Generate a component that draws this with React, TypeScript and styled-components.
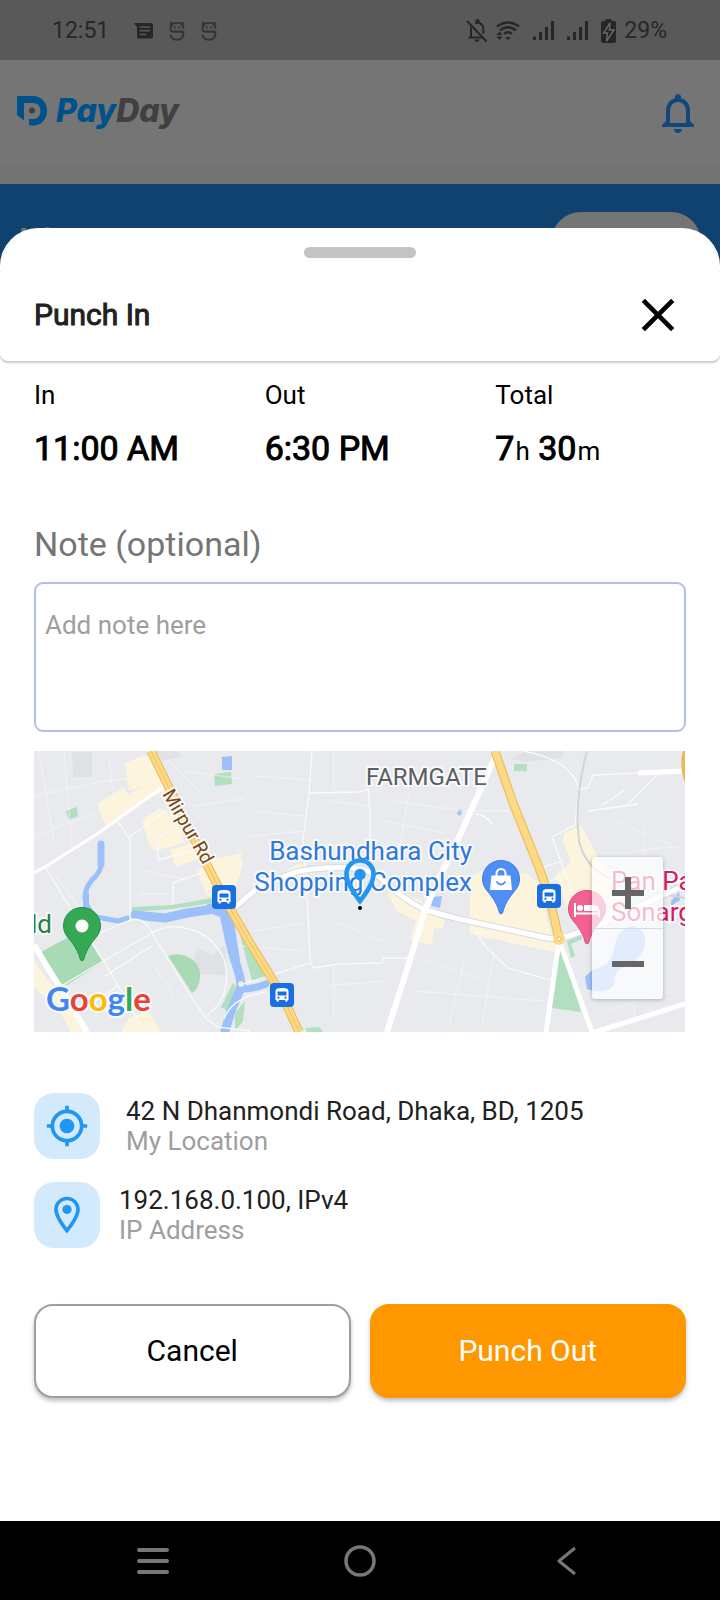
import React from 'react';
import styled, { createGlobalStyle } from 'styled-components';
import {
  MdClose,
  MdMyLocation,
  MdOutlineLocationOn,
  MdNotificationsNone,
} from 'react-icons/md';

const GlobalStyle = createGlobalStyle`
  *, *::before, *::after { box-sizing: border-box; }
  body {
    margin: 0;
    background: #10426f;
    font-family: Roboto, "Liberation Sans", sans-serif;
    color: #212121;
  }
  button, textarea { font: inherit; }
  h1, h2, p, dl, dt, dd { margin: 0; font-weight: 400; }
`;

const Screen = styled.div`
  display: flex;
  flex-direction: column;
  min-height: 100vh;
`;

const StatusBar = styled.header`
  display: flex;
  align-items: center;
  justify-content: space-between;
  height: 60px;
  padding: 2px 53px 0 52px;
  background: #595959;
  color: #272727;
  font-size: 23px;
  line-height: 28px;
`;

const StatusGroup = styled.div<{ $gap: number }>`
  display: flex;
  align-items: center;
  gap: ${(p) => p.$gap}px;
  svg { display: block; }
`;

const Clock = styled.time`
  margin-right: 9px;
`;

const AppBar = styled.div`
  display: flex;
  align-items: center;
  justify-content: space-between;
  height: 124px;
  padding: 0 18px 18px 17px;
  background: linear-gradient(#757575 105px, #727272 105px);
`;

const Brand = styled.div`
  display: flex;
  align-items: center;
  gap: 8px;
  padding-bottom: 5px;
`;

const BrandName = styled.span`
  font-family: Inter, "Open Sans", sans-serif;
  font-size: 32px;
  line-height: 40px;
  font-weight: 800;
  font-style: italic;
  color: #404040;
`;

const BrandAccent = styled.span`
  color: #00508a;
`;

const IconButton = styled.button<{ $color: string }>`
  display: flex;
  padding: 0;
  border: 0;
  background: none;
  color: ${(p) => p.$color};
  cursor: pointer;
`;

const Hero = styled.div`
  display: flex;
  justify-content: space-between;
  height: 84px;
  padding: 28px 19px 0;
  background: #10426f;
`;

const Greeting = styled.p`
  padding-top: 8px;
  font-size: 34px;
  line-height: 40px;
  font-weight: 700;
  color: #757575;
`;

const HeroPill = styled.div`
  width: 150px;
  height: 60px;
  border-radius: 30px;
  background: #757575;
`;

const Sheet = styled.main`
  position: relative;
  flex: 1;
  margin-top: -40px;
  border-radius: 38px 38px 0 0;
  background: #fff;
`;

const Handle = styled.div`
  width: 112px;
  height: 11px;
  margin: 0 auto;
  border-radius: 6px;
  background: #c4c4c4;
`;

const HandleArea = styled.div`
  padding: 19px 0 9px;
`;

const SheetHeader = styled.div`
  display: flex;
  align-items: center;
  justify-content: space-between;
  height: 94px;
  padding: 2px 34px 0 34px;
  border-radius: 8px;
  box-shadow: 0 2px 2px rgba(0, 0, 0, 0.2), 0 0 2px rgba(0, 0, 0, 0.06);
`;

const Title = styled.h1`
  font-size: 30px;
  line-height: 36px;
  -webkit-text-stroke: 1px #212121;
`;

const Content = styled.div`
  padding: 19px 34px 60px;
`;

const Stats = styled.dl`
  display: grid;
  grid-template-columns: repeat(3, 1fr);
  gap: 40px;
  color: #000;
`;

const Stat = styled.div`
  display: flex;
  flex-direction: column;
  gap: 18px;
  white-space: nowrap;
`;

const StatLabel = styled.dt`
  font-size: 26px;
  line-height: 30px;
`;

const StatValue = styled.dd`
  font-size: 34px;
  line-height: 40px;
  -webkit-text-stroke: 1px #000;
`;

const Unit = styled.span`
  margin-left: 1px;
  font-size: 26px;
  line-height: 30px;
  -webkit-text-stroke: 0;
`;

const NoteLabel = styled.label`
  display: block;
  margin-top: 56px;
  font-size: 34px;
  line-height: 40px;
  color: #757575;
`;

const NoteInput = styled.textarea`
  display: block;
  width: 100%;
  height: 150px;
  margin-top: 18px;
  padding: 26px 9px;
  border: 2px solid #b5bdf0;
  border-radius: 9px;
  outline: 0;
  resize: none;
  background: #fff;
  font-size: 26px;
  line-height: 30px;
  &::placeholder { color: #9e9e9e; opacity: 1; }
`;

const MapFrame = styled.section`
  position: relative;
  height: 281px;
  margin: 19px 1px 0 0;
  overflow: hidden;
  background: #e8eaed;
  svg { display: block; }
`;

const ZoomControls = styled.div`
  position: absolute;
  right: 22px;
  bottom: 33px;
  display: flex;
  flex-direction: column;
  border-radius: 3px;
  background: rgba(255, 255, 255, 0.7);
  box-shadow: 0 1px 4px rgba(0, 0, 0, 0.25);
`;

const ZoomButton = styled.button`
  display: grid;
  place-items: center;
  width: 71px;
  height: 71px;
  padding: 0;
  border: 0;
  background: none;
  cursor: pointer;
  & + & { border-top: 1px solid #dadcdf; }
`;

const Details = styled.div`
  display: flex;
  flex-direction: column;
  gap: 23px;
  margin-top: 61px;
`;

const DetailRow = styled.div<{ $gap: number }>`
  display: flex;
  align-items: center;
  gap: ${(p) => p.$gap}px;
`;

const DetailIcon = styled.div`
  display: grid;
  place-items: center;
  width: 66px;
  height: 66px;
  border-radius: 20px;
  background: #d3e9fc;
  color: #2196f3;
`;

const DetailText = styled.p<{ $muted?: boolean }>`
  font-size: 26px;
  line-height: 30px;
  color: ${(p) => (p.$muted ? '#9e9e9e' : '#212121')};
`;

const Actions = styled.div`
  display: grid;
  grid-template-columns: 1fr 1fr;
  gap: 19px;
  margin-top: 56px;
`;

const ActionButton = styled.button<{ $primary?: boolean }>`
  height: 94px;
  border: 2px solid ${(p) => (p.$primary ? '#ff9800' : '#9e9e9e')};
  border-radius: 19px;
  background: ${(p) => (p.$primary ? '#ff9800' : '#fff')};
  color: ${(p) => (p.$primary ? '#fff' : '#000')};
  font-size: 30px;
  line-height: 36px;
  box-shadow: 0 3px 4px rgba(0, 0, 0, 0.25);
  cursor: pointer;
`;

const NavBar = styled.nav`
  position: relative;
  display: grid;
  grid-template-columns: repeat(3, 1fr);
  height: 79px;
  padding: 0 50px;
  background: #000;
`;

const NavButton = styled.button`
  display: grid;
  place-items: center;
  padding: 0;
  border: 0;
  background: none;
  cursor: pointer;
`;

const MutedBellIcon = () => (
  <svg width="22" height="24" viewBox="0 0 22 24" fill="none" stroke="#272727" strokeWidth="2">
    <path d="M1 2l19.500 20.500" />
    <path d="M2.500 18.500h15M5 18V10q0-2 1-3.500M9 4.200q5-1.600 7.500 2.300.8 1.500.8 3.500v4.500" />
    <path d="M9.500 3.500V2a2 2 0 0 1 4 0v1.500zM8.500 20.500h5q-.5 2.500-2.500 2.500t-2.500-2.500z" fill="#272727" stroke="none" />
  </svg>
);

const AppNoticeIcon = () => (
  <svg width="16" height="20" viewBox="0 0 16 20" fill="none" stroke="#323232" strokeWidth="1.8">
    <path d="M14.400 8V7.500C14.400 3.600 11.600 1.900 8 1.900S1.600 3.600 1.600 7.500v1.100c0 1.400.8 2 2 2h10.800V13c0 3.600-2.600 5.800-6.400 5.800S1.600 16.600 1.600 13.500" />
    <path d="M1 1.200h3.500L1.500 4.500zM15 1.200h-3.500l3 3.300z" fill="#323232" stroke="none" />
    <path d="M4.800 6.500h1.800M9.400 6.500h1.800M5 10.600h9" />
  </svg>
);

const SignalIcon = () => (
  <svg width="21" height="20" viewBox="0 0 21 20" fill="#262626">
    <path d="M0 15.500h3V19H0zM6 11h3v8H6zM12 6h3v13h-3zM18 0h3v19h-3z" />
  </svg>
);

const BusStop = ({ x, y }: { x: number; y: number }) => (
  <g transform={`translate(${x - 12} ${y - 12})`}>
    <rect width="24" height="24" rx="4" fill="#1a6fe0" />
    <path
      fill="#fff"
      d="M5.500 8.500C5.500 5.500 8 5 12 5s6.500.5 6.500 3.500V17h-1v1.600h-2.300V17H8.800v1.600H6.500V17h-1zM7.500 8.500v4h9v-4z"
      fillRule="evenodd"
    />
    <circle cx="8.500" cy="14.700" r="1.100" fill="#1a6fe0" />
    <circle cx="15.500" cy="14.700" r="1.100" fill="#1a6fe0" />
  </g>
);

const PlacePin = ({ x, y, fill, edge, children }: {
  x: number; y: number; fill: string; edge: string; children: React.ReactNode;
}) => (
  <g transform={`translate(${x} ${y})`}>
    <path
      d="M0-18.500C10.500-18.500 18.500-10.500 18.500 0 18.500 7 14.500 11 10 16.500 5.500 22.500 3 28 1.500 34Q0 36-1.500 34C-3 28-5.500 22.500-10 16.500-14.500 11-18.500 7-18.500 0-18.500-10.500-10.500-18.500 0-18.500z"
      fill={fill}
      stroke={edge}
    />
    {children}
  </g>
);

const CityMap = () => (
  <svg width="100%" height="281" viewBox="0 0 651 281" preserveAspectRatio="xMidYMid slice" role="img" aria-label="Map around Bashundhara City, Dhaka">
    <rect width="651" height="281" fill="#e8eaed" />

    {/* Large plots */}
    <path fill="#dfe1e4" d="M38 1h20v25H39zM122 0h20l7 5-21 5zM477 8l13-8h40l-3 7-35 4zM163 197l16 7 12-10 2 30-29-1-4-14z" />

    {/* Commercial areas */}
    <g fill="#fcf4dc">
      <path d="M91 12l20-8 13 5 8 14 4 14-15 8-6-10-20 4zM63 53l27-17 4 7 28-13 9 8-31 17-22 20-7-1zM108 69l18-12 12 7 9 16 4 12-31 8-6-9zM136 99l25-8 9 15-28 10zM163 121l13-12 31-7v20l-6 13-28 10z" />
      <path d="M0 210l30 40 20 31H37l-11-20L0 236zM94 268l20-9 13 22H87zM250 120l16-8 15 8-14 6zM353 142h15l20 8 6 12 17 7-2 9-9-1-2 17-22-6 6-18-19-10zM206 104l3 8-3 12z" />
      <path d="M436 126l14-8 43 5 14 10 7 40 8 20-2 8-84-18zM530 82l17-8 17 32 26 39-7 28-47-6-12-36-4-5 17-15-8-20zM436 178l24 6-6 4z" />
    </g>

    {/* Parks */}
    <g fill="#b2dfc0">
      <path d="M180 23l17-2 1 12-17 2zM32 60l11-4 1 9-9 4zM98 156l41-2 39-7v5l-39 6-41 3zM204 176l12 16 20 34-18 4zM212 192l12 18 14 15-15 4zM187 256l12-24 3 4-9 24zM201 262l10-12-2 20-8 10zM271 277l15-1 3 5h-16zM480 13h13v7h-13zM524 202l4-5 19 64-29-4zM533 190l14-6 1 4-11 5 4 12-4 2z" />
      <path fill="#a8dab5" d="M7 201l41-22 21 32-36 23-7-2zM134 205q6-3 15-1 18 6 17 22-1 12-8 16z" />
    </g>

    {/* Waterways */}
    <g stroke="#9cc0f9" fill="none" strokeLinecap="round" strokeLinejoin="round">
      <path d="M67 93v20" strokeWidth="7" />
      <path d="M67 115q-2 8-9 14-7 8-7 17 0 7 5 13" strokeWidth="5" />
      <path d="M52 143v12" strokeWidth="6" />
      <path d="M62 166l22 4 10-3" strokeWidth="5" />
      <path d="M101 164l30 3 22-5 28-4" strokeWidth="9" />
      <path d="M176 157l14 6 7 33 9 30 1 10-10 24-6 20" strokeWidth="9" />
      <path d="M186 155l8 10 7 44" strokeWidth="10" />
      <path d="M207 238q14 0 25-5" strokeWidth="7" />
    </g>
    <g fill="#9cc0f9">
      <path d="M188 6l10-1v14h-10zM399 146l9-1-2 12-9-2zM425 58l4 1-3 6-3-2zM551 226q7-8 15-10 10-4 13-14 3-18 10-23 12-8 20 2 4 9 1 16-7 16-24 21-6 4-6 16-9 10-27 4zM637 150l8-9 1 8-9 6z" />
      <circle cx="207" cy="233" r="3" fill="#e8eaed" />
    </g>

    {/* Minor streets */}
    <g stroke="#f9fafb" fill="none" strokeWidth="1.300">
      <path d="M11 116l37 60 23 36 38 66M29 234l42-25 47-27q12-8 27-6 32 4 45 32 10 38-19 58l-15-22-38-62M171 266l12 10 33 4M96 169V89L83 69M96 169q14-4 22 13M96 169l-30 13-20 12M94 87l39-28M124 109V87l15-8M124 109l33-9M139 152v-20l37-13M71 225l47-30M83 235l-32 23M190 268q8-22 42-27" />
      <path d="M278 0l-3 42-6 47 5 73 2 47 3 8 27-4 42-1 1-5h25M275 42l51-1 8-3 2 23v38M206 234l70-22" />
      <path d="M439 176l14 21 21 20 42 12M489 0q49 9 56 38l-4 36-23 12 20 55M504 118l25-8M505 135l26-11M545 38l9-1 5-13 45-2M554 60l50-7M568 54l23-15M593 54l30-30M442 63q8 0 16 10" />
      <path opacity=".45" d="M0 45l70-15 60-5M5 0l15 90M30 0l8 95M75 5l5 50M0 85l60-22M150 20l60 8M160 55l50-7M220 25l60 4M218 60l52 5M215 85l55-5M295 50l40 5M300 0v40M360 50l70 10M350 70l60 12M375 40l-10 60M206 195l65 5M220 180l50-8M300 170l50 20M290 235l60-5M300 215v50M390 210l60 20M380 240l130 10M430 210l-15 65M460 200l-12 75M480 90l25-10M475 60h-50M580 70l60 25M600 100l50-5M610 70v40M600 245v30M570 260l70-20M18 120l48 65M110 120l50 10M105 143h30M120 215l20 30M135 10l30 30" />
    </g>

    {/* Railway */}
    <path d="M553 0q-13 48-8 90 6 25 28 36 30 13 78 21" stroke="#d2d4d7" fill="none" strokeWidth="2" />

    {/* Main streets */}
    <g fill="none" stroke="#fff" strokeLinejoin="round">
      <path d="M0 122l11-6 52-33 70-50" strokeWidth="3" />
      <path d="M0 194l53 87" strokeWidth="6" />
      <path d="M196 160l10-8 20-17 30-12q25-8 63-6 20 2 30 12 18 18 42 30l34 9 88 19 12 1 34-11 92-43" stroke="#d8dbdf" strokeWidth="7" />
      <path d="M196 160l10-8 20-17 30-12q25-8 63-6 20 2 30 12 18 18 42 30l34 9 88 19 12 1 34-11 92-43" strokeWidth="5" />
      <path d="M464 0l-13 28-25 56-23 48-12 27-15 50-23 72" strokeWidth="6" />
      <path d="M525 190l-13 91M526 192l32 89M558 282l93-29" strokeWidth="5" />
      <path d="M604 22l47-2" strokeWidth="5" />
    </g>

    {/* Highways */}
    <g fill="none">
      <g stroke="#eab94f" strokeWidth="9">
        <path d="M117 0l52 106 21 41 26 45 32 52 17 37M461 0l18 52 25 62 11 30 10 44" />
        <path d="M652 0q-4 14 1 29" strokeWidth="6" />
      </g>
      <path d="M117 0l52 106 21 41 26 45 32 52 17 37M461 0l18 52 25 62 11 30 10 44" stroke="#fdd985" strokeWidth="7" />
      <path d="M117 0l52 106 21 41 26 45 32 52 17 37" stroke="#efc261" strokeWidth="1" />
    </g>
    <circle cx="525" cy="188" r="6" fill="#fdd985" />
    <circle cx="525" cy="188" r="2" fill="#fff" stroke="#eab94f" />

    <BusStop x={190} y={146} />
    <BusStop x={248} y={244} />
    <BusStop x={515} y={145} />

    {/* Labels */}
    <g stroke="#f8f9fa" strokeWidth="4" strokeLinejoin="round" paintOrder="stroke" fontFamily="Roboto, sans-serif" fontSize="26">
      <text x="453" y="34" textAnchor="end" fontSize="24" fill="#5a5e63">FARMGATE</text>
      <text x="438" y="109" textAnchor="end" fill="#2f78dc">Bashundhara City</text>
      <text x="438" y="140" textAnchor="end" fill="#2f78dc">Shopping Complex</text>
      <text transform="translate(128 43) rotate(60)" fontSize="19" fill="#7a4810">Mirpur Rd</text>
      <text x="18" y="182" textAnchor="end" fill="#26804a">ld</text>
      <text x="577" y="139" fill="#d81b60">Pan Pa</text>
      <text x="577" y="170" fill="#d81b60">Sonarg</text>
    </g>

    <PlacePin x={48} y={175} fill="#34a853" edge="#23904a">
      <circle r="6.500" fill="#fff" />
    </PlacePin>
    <PlacePin x={467} y={128} fill="#4f8ff5" edge="#3c7de6">
      <path d="M-9.500-3.500h19L11 11h-22z" fill="#fff" />
      <path d="M-4.500-3v-2.500a4.500 4.500 0 0 1 9 0V-3" fill="none" stroke="#fff" strokeWidth="2" />
      <path d="M-4.500 2.500q4.500 6 9 0" fill="none" stroke="#4f8ff5" strokeWidth="2" />
    </PlacePin>
    <PlacePin x={553} y={158} fill="#f06292" edge="#e24a80">
      <path d="M-12-6v14M-12 4.500h24M12 8V1" stroke="#fff" strokeWidth="2" fill="none" />
      <path d="M-3-4H7q5 0 5 6H-3z" fill="#fff" />
      <circle cx="-7" cy="-1" r="3" fill="#fff" />
    </PlacePin>

    <text x="12" y="260" fontFamily="Lato, sans-serif" fontSize="33" fontWeight="700" stroke="#f8f9fa" strokeWidth="4" strokeLinejoin="round" paintOrder="stroke">
      <tspan fill="#4285f4">G</tspan>
      <tspan fill="#ea4335">o</tspan>
      <tspan fill="#fbbc05">o</tspan>
      <tspan fill="#4285f4">g</tspan>
      <tspan fill="#34a853">l</tspan>
      <tspan fill="#ea4335">e</tspan>
    </text>

    {/* Current position */}
    <path d="M326 109.500c-7.600 0-13.500 6-13.500 13.500 0 9 8 20 13.500 27 5.500-7 13.500-18 13.500-27 0-7.500-5.900-13.500-13.500-13.500z" fill="none" stroke="#2196f3" strokeWidth="4.600" />
    <circle cx="326" cy="123.500" r="5.700" fill="#2196f3" />
    <circle cx="326" cy="157" r="2" fill="#000" />
  </svg>
);

export default function App() {
  return (
    <Screen>
      <GlobalStyle />
      <StatusBar>
        <StatusGroup $gap={16}>
          <Clock>12:51</Clock>
          <svg width="19" height="16" viewBox="0 0 19 16">
            <path d="M0 0h17a2 2 0 0 1 2 2v11.500a2 2 0 0 1-2 2H5a2 2 0 0 1-2-2V4z" fill="#272727" />
            <path d="M5.500 4h10.500M5.500 7.800h10.500M5.500 11.500h6.500" stroke="#595959" strokeWidth="1.500" />
          </svg>
          <AppNoticeIcon />
          <AppNoticeIcon />
        </StatusGroup>
        <StatusGroup $gap={8}>
          <MutedBellIcon />
          <StatusGroup $gap={13}>
            <svg width="24" height="20" viewBox="0 0 24 20" fill="none" stroke="#272727" strokeWidth="2.400">
              <path d="M1 5.500Q12-2.500 23 5.500M4 9.200q8-6 16 0M8 12.800q4-3 8 0" />
              <path d="M12 19.500l-2.800-3.500h5.600z" fill="#272727" stroke="none" />
              <path d="M3.500 10.500l3 3.500h-6zM3.500 19l3-3.500h-6z" fill="#272727" stroke="none" />
            </svg>
            <SignalIcon />
            <SignalIcon />
            <svg width="15" height="24" viewBox="0 0 15 24">
              <path d="M4.500 0h6v2H13a2 2 0 0 1 2 2v18a2 2 0 0 1-2 2H2a2 2 0 0 1-2-2V4a2 2 0 0 1 2-2h2.500z" fill="#262626" />
              <path d="M9 4L2.500 14h4L5.500 22 13 11H8.500z" fill="#262626" stroke="#696969" strokeWidth="1.400" />
            </svg>
          </StatusGroup>
          <span>29%</span>
        </StatusGroup>
      </StatusBar>

      <AppBar>
        <Brand>
          <svg width="31" height="30" viewBox="0 0 31 30">
            <path d="M0 0h16c8.500 0 14 6.500 14 15S24 29.500 16 29.500h-4V23h4c4.600 0 7.500-3.500 7.500-8S20.600 7 16 7H7v17.500L0 19z" fill="#00508a" />
            <circle cx="15" cy="14.500" r="3" fill="#404040" />
          </svg>
          <BrandName><BrandAccent>Pay</BrandAccent>Day</BrandName>
        </Brand>
        <IconButton $color="#10487c" aria-label="Notifications">
          <MdNotificationsNone size={48} />
        </IconButton>
      </AppBar>

      <Hero>
        <Greeting>Hi, S</Greeting>
        <HeroPill />
      </Hero>

      <Sheet>
        <HandleArea><Handle /></HandleArea>
        <SheetHeader>
          <Title>Punch In</Title>
          <IconButton $color="#000" aria-label="Close">
            <MdClose size={56} />
          </IconButton>
        </SheetHeader>

        <Content>
          <Stats>
            <Stat>
              <StatLabel>In</StatLabel>
              <StatValue>11:00 AM</StatValue>
            </Stat>
            <Stat>
              <StatLabel>Out</StatLabel>
              <StatValue>6:30 PM</StatValue>
            </Stat>
            <Stat>
              <StatLabel>Total</StatLabel>
              <StatValue>7<Unit>h</Unit> 30<Unit>m</Unit></StatValue>
            </Stat>
          </Stats>

          <NoteLabel htmlFor="note">Note (optional)</NoteLabel>
          <NoteInput id="note" placeholder="Add note here" />

          <MapFrame>
            <CityMap />
            <ZoomControls>
              <ZoomButton aria-label="Zoom in">
                <svg width="32" height="32" viewBox="0 0 32 32"><path d="M0 16h32M16 0v32" stroke="#666" strokeWidth="6" /></svg>
              </ZoomButton>
              <ZoomButton aria-label="Zoom out">
                <svg width="32" height="32" viewBox="0 0 32 32"><path d="M0 16h32" stroke="#666" strokeWidth="6" /></svg>
              </ZoomButton>
            </ZoomControls>
          </MapFrame>

          <Details>
            <DetailRow $gap={26}>
              <DetailIcon><MdMyLocation size={44} /></DetailIcon>
              <div>
                <DetailText>42 N Dhanmondi Road, Dhaka, BD, 1205</DetailText>
                <DetailText $muted>My Location</DetailText>
              </div>
            </DetailRow>
            <DetailRow $gap={19}>
              <DetailIcon><MdOutlineLocationOn size={44} /></DetailIcon>
              <div>
                <DetailText>192.168.0.100, IPv4</DetailText>
                <DetailText $muted>IP Address</DetailText>
              </div>
            </DetailRow>
          </Details>

          <Actions>
            <ActionButton>Cancel</ActionButton>
            <ActionButton $primary>Punch Out</ActionButton>
          </Actions>
        </Content>
      </Sheet>

      <NavBar>
        <NavButton aria-label="Recent apps">
          <svg width="32" height="28" viewBox="0 0 32 28"><path d="M2 3h28M2 14h28M2 25h28" stroke="#777" strokeWidth="4" strokeLinecap="round" /></svg>
        </NavButton>
        <NavButton aria-label="Home">
          <svg width="32" height="32" viewBox="0 0 32 32"><circle cx="16" cy="16" r="14" fill="none" stroke="#777" strokeWidth="3.500" /></svg>
        </NavButton>
        <NavButton aria-label="Back">
          <svg width="20" height="30" viewBox="0 0 20 30"><path d="M18 2L2 15l16 13" fill="none" stroke="#777" strokeWidth="3" strokeLinejoin="round" /></svg>
        </NavButton>
      </NavBar>
    </Screen>
  );
}
